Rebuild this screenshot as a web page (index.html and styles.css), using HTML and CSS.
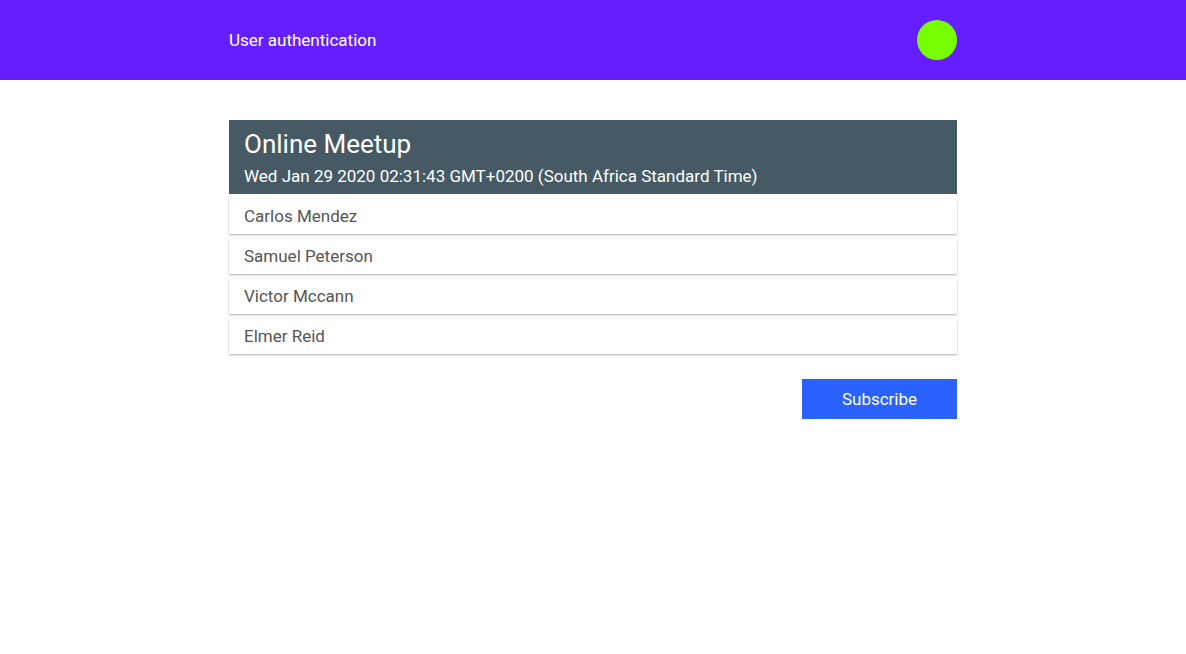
FILE: index.html
```html
<!DOCTYPE html>
<html>
<head>
<meta charset="utf-8">
<link rel="stylesheet" href="styles.css">
</head>
<body>
<header class="topbar">
  <div class="wrap topbar-inner">
    <span class="brand">User authentication</span>
    <span class="avatar"></span>
  </div>
</header>
<main class="wrap content">
  <section class="event">
    <h1 class="event-title">Online Meetup</h1>
    <div class="event-date">Wed Jan 29 2020 02:31:43 GMT+0200 (South Africa Standard Time)</div>
  </section>
  <ul class="people">
    <li class="person">Carlos Mendez</li>
    <li class="person">Samuel Peterson</li>
    <li class="person">Victor Mccann</li>
    <li class="person">Elmer Reid</li>
  </ul>
  <div class="actions">
    <button class="subscribe">Subscribe</button>
  </div>
</main>
</body>
</html>
```
FILE: styles.css
```css
* { box-sizing: border-box; }
body {
  margin: 0;
  font-family: Roboto, "Liberation Sans", sans-serif;
  background: #fff;
}
.wrap {
  width: 728px;
  margin: 0 auto;
}
.topbar {
  background: #651fff;
  height: 80px;
}
.topbar-inner {
  height: 80px;
  display: flex;
  align-items: center;
  justify-content: space-between;
}
.brand {
  color: #fff;
  font-size: 17px;
  font-weight: 400;
}
.avatar {
  width: 40px;
  height: 40px;
  border-radius: 50%;
  background: #76ff03;
}
.content {
  padding-top: 40px;
}
.event {
  background: #455a64;
  color: #fff;
  padding: 8px 15px 0;
  height: 74px;
}
.event-title {
  margin: 0;
  font-size: 26px;
  font-weight: 400;
  line-height: 32px;
}
.event-date {
  font-size: 17px;
  font-weight: 400;
  line-height: 24px;
  margin-top: 4px;
}
.people {
  list-style: none;
  margin: 5px 0 0;
  padding: 0;
  display: flex;
  flex-direction: column;
  gap: 5px;
}
.person {
  height: 35px;
  line-height: 35px;
  padding: 0 15px;
  font-size: 17px;
  color: #555;
  background: #fff;
  box-shadow: 0 1px 2px rgba(0,0,0,0.3), 0 0 1px rgba(0,0,0,0.08);
}
.actions {
  display: flex;
  justify-content: flex-end;
  margin-top: 25px;
}
.subscribe {
  width: 155px;
  height: 40px;
  border: none;
  background: #2962ff;
  color: #fff;
  font-family: Roboto, "Liberation Sans", sans-serif;
  font-size: 17px;
  font-weight: 400;
  cursor: pointer;
}
```
